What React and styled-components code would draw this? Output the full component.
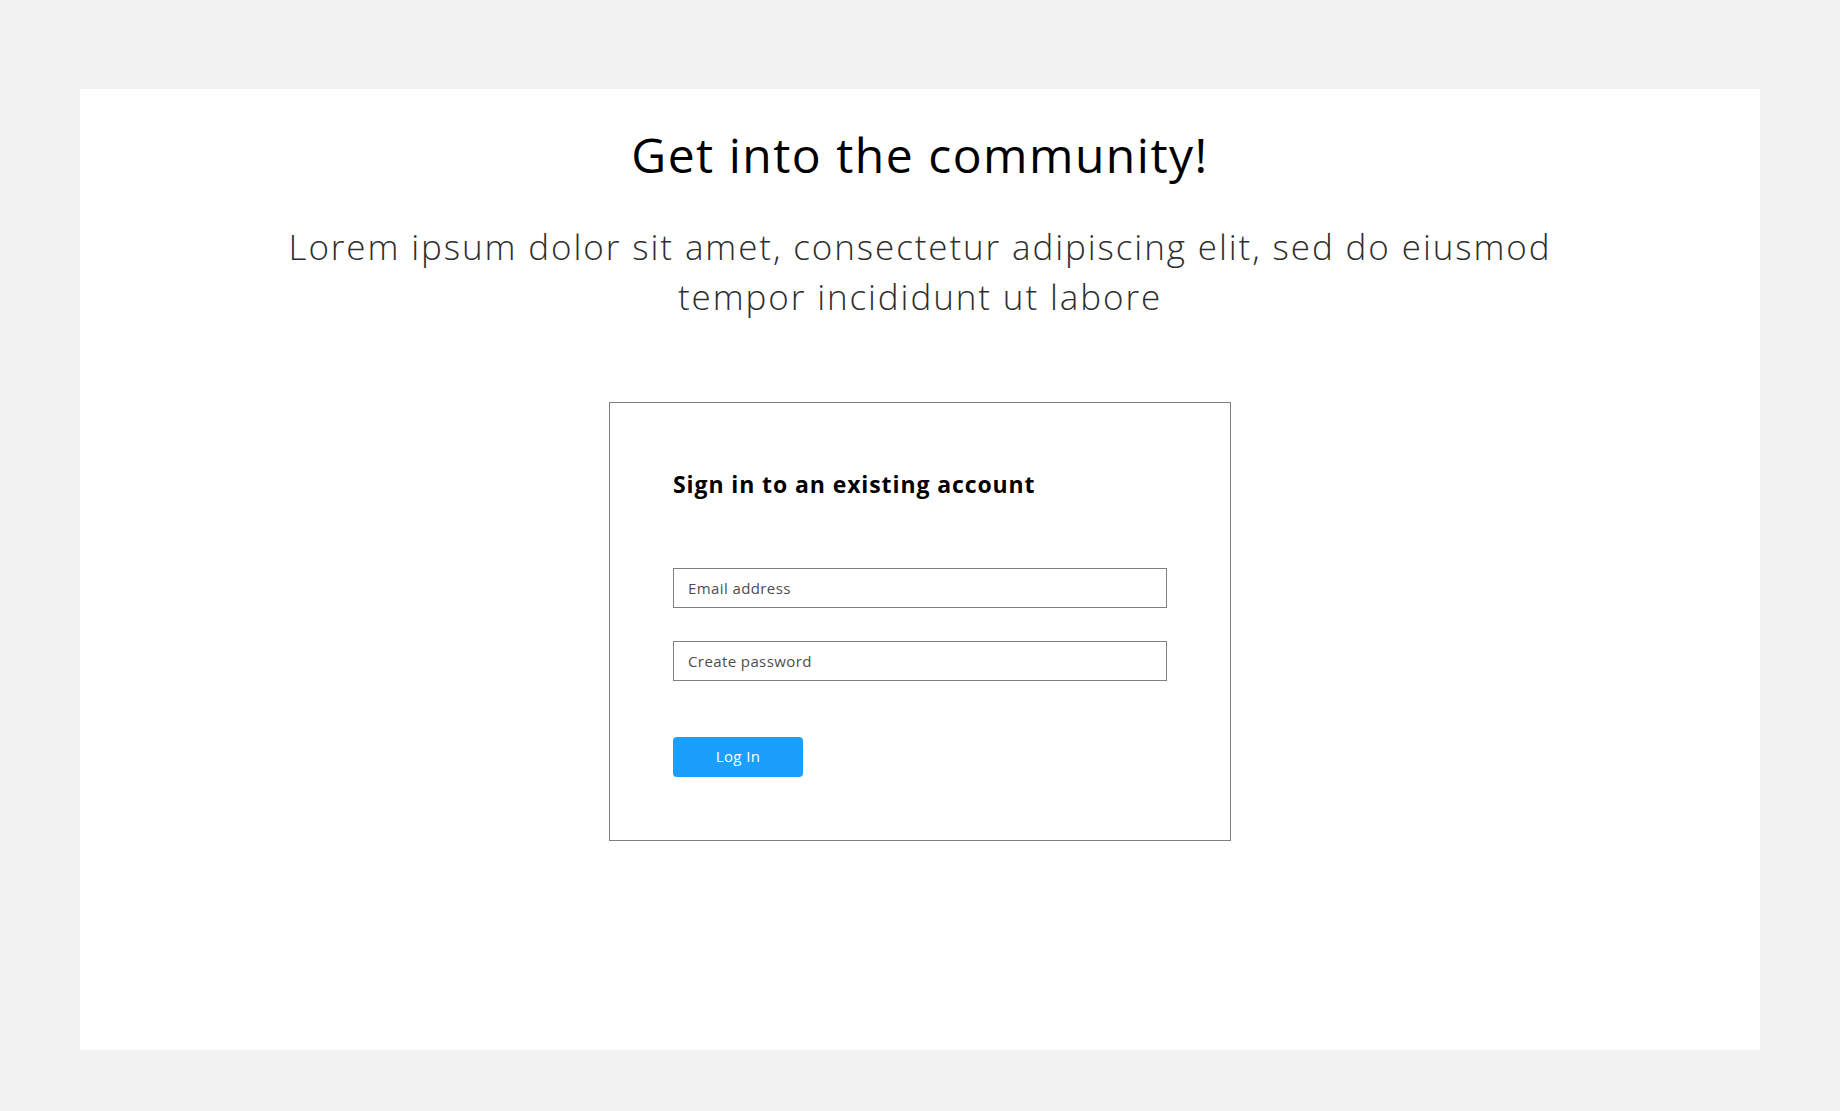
import React from "react";
import styled, { createGlobalStyle } from "styled-components";

const GlobalStyle = createGlobalStyle`
  * { box-sizing: border-box; }
  html, body { margin: 0; padding: 0; }
  body {
    background: #f2f2f2;
    font-family: "Open Sans", "Liberation Sans", sans-serif;
    color: #000;
  }
`;

const Page = styled.div`
  padding: 89px 80px 61px;
`;

const Panel = styled.main`
  background: #ffffff;
  min-height: 961px;
  padding: 34px 40px 64px;
  display: flex;
  flex-direction: column;
  align-items: center;
`;

const Title = styled.h1`
  margin: 0;
  font-size: 48px;
  font-weight: 400;
  letter-spacing: 1.5px;
  line-height: 64px;
  color: #000;
  text-align: center;
`;

const Subtitle = styled.p`
  margin: 35px 0 0;
  max-width: 1320px;
  font-size: 35px;
  font-weight: 300;
  letter-spacing: 1.9px;
  line-height: 50px;
  color: #2e2e2e;
  text-align: center;
`;

const Card = styled.section`
  margin-top: 80px;
  width: 622px;
  border: 1px solid #7f7f7f;
  padding: 64px 63px 63px;
  display: flex;
  flex-direction: column;
  align-items: flex-start;
`;

const CardTitle = styled.h2`
  margin: 0;
  font-size: 23px;
  font-weight: 700;
  letter-spacing: 0.9px;
  line-height: 34px;
  color: #000;
`;

const Form = styled.form`
  margin-top: 67px;
  width: 100%;
  display: flex;
  flex-direction: column;
  align-items: flex-start;
`;

const Field = styled.input`
  width: 100%;
  height: 40px;
  margin: 0 0 ${(p) => p.$gap}px;
  padding: 0 14px;
  border: 1px solid #808080;
  border-radius: 0;
  background: #fff;
  font-family: inherit;
  font-size: 15px;
  letter-spacing: 0.4px;
  color: #333;
  outline: none;

  &::placeholder {
    color: #4d4d4d;
  }
`;

const Button = styled.button`
  width: 130px;
  height: 40px;
  padding: 0 0 2px;
  border: none;
  border-radius: 4px;
  background: #1aa0fc;
  color: #ffffff;
  font-family: inherit;
  font-size: 15px;
  font-weight: 400;
  letter-spacing: 0.4px;
  cursor: pointer;
`;

export default function App() {
  return (
    <>
      <GlobalStyle />
      <Page>
        <Panel>
          <Title>Get into the community!</Title>
          <Subtitle>
            Lorem ipsum dolor sit amet, consectetur adipiscing elit, sed do
            eiusmod tempor incididunt ut labore
          </Subtitle>
          <Card>
            <CardTitle>Sign in to an existing account</CardTitle>
            <Form onSubmit={(e) => e.preventDefault()}>
              <Field type="email" placeholder="Email address" $gap={33} />
              <Field type="password" placeholder="Create password" $gap={56} />
              <Button type="submit">Log In</Button>
            </Form>
          </Card>
        </Panel>
      </Page>
    </>
  );
}
